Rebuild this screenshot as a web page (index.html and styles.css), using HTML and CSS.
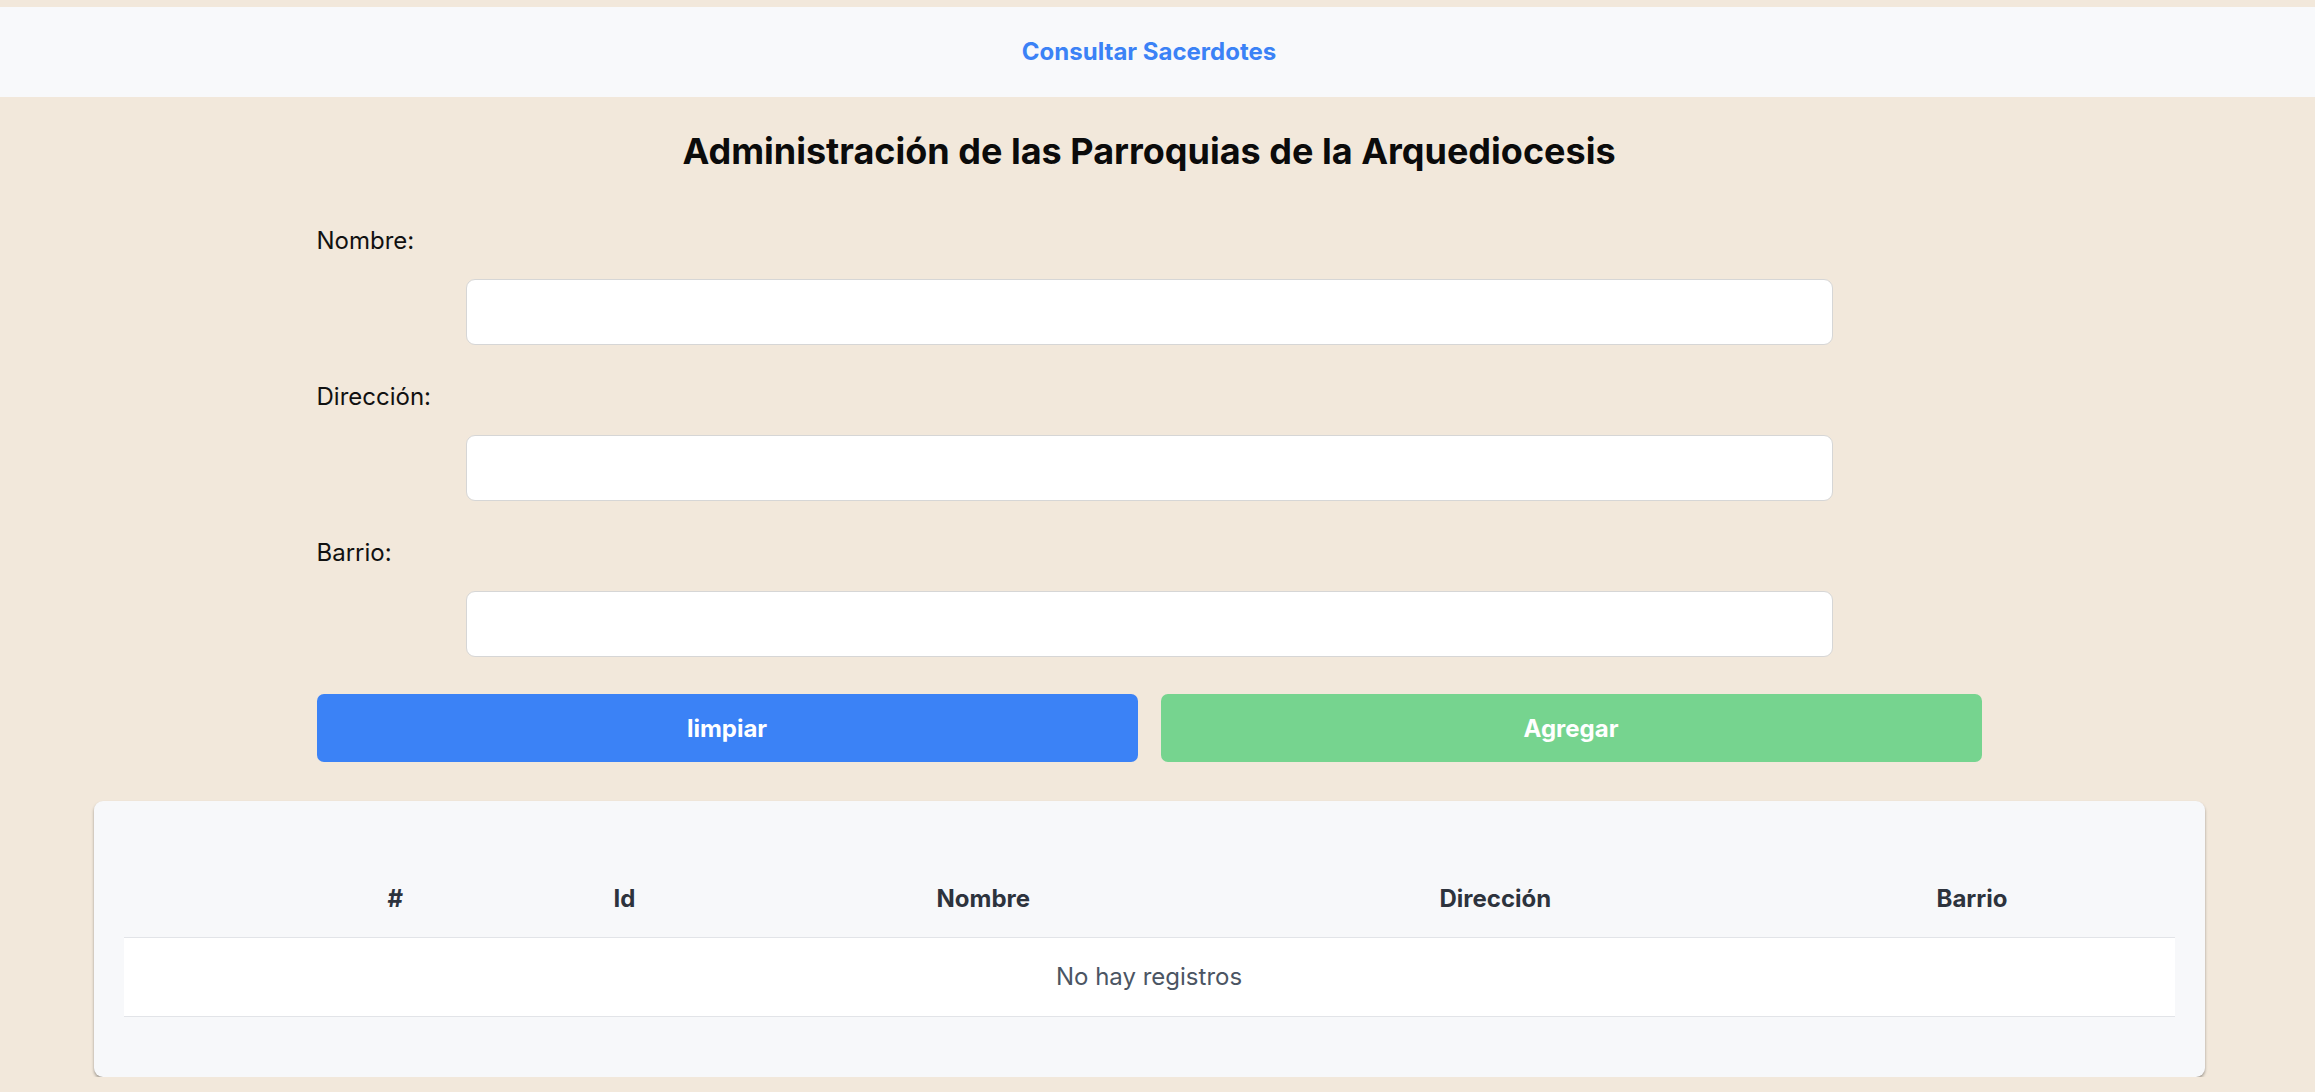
FILE: index.html
```html
<!DOCTYPE html>
<html lang="es">
<head>
<meta charset="utf-8">
<title>Parroquias</title>
<link rel="stylesheet" href="styles.css">
</head>
<body>
<nav class="topnav">
  <a class="nav-link" href="#">Consultar Sacerdotes</a>
</nav>
<main class="main">
  <h1 class="title">Administración de las Parroquias de la Arquediocesis</h1>
  <form class="form">
    <div class="field">
      <label class="label">Nombre:</label>
      <input class="input" type="text">
    </div>
    <div class="field">
      <label class="label">Dirección:</label>
      <input class="input" type="text">
    </div>
    <div class="field">
      <label class="label">Barrio:</label>
      <input class="input" type="text">
    </div>
    <div class="actions">
      <button type="button" class="btn btn-blue">limpiar</button>
      <button type="button" class="btn btn-green">Agregar</button>
    </div>
  </form>
  <section class="card">
    <table class="table">
      <thead>
        <tr>
          <th class="c1">#</th>
          <th class="c2">Id</th>
          <th class="c3">Nombre</th>
          <th class="c4">Dirección</th>
          <th class="c5">Barrio</th>
        </tr>
      </thead>
      <tbody>
        <tr>
          <td class="empty" colspan="5">No hay registros</td>
        </tr>
      </tbody>
    </table>
  </section>
</main>
</body>
</html>
```
FILE: styles.css
```css
* { box-sizing: border-box; }
html, body { margin: 0; padding: 0; }
body {
  background: #f2e8db;
  font-family: Inter, "Liberation Sans", sans-serif;
  font-size: 24px;
  line-height: 36px;
  color: #111111;
}
.topnav {
  margin-top: 7px;
  height: 90px;
  background: #f8f9fb;
  display: flex;
  align-items: center;
  justify-content: center;
  padding-right: 17px;
}
.nav-link {
  color: #3b82f6;
  font-weight: 700;
  font-size: 24px;
  text-decoration: none;
}
.main {
  padding-right: 17px;
}
.title {
  margin: 30px 0 0;
  text-align: center;
  font-size: 36px;
  line-height: 48px;
  font-weight: 700;
  color: #0b0b0b;
}
.form {
  width: 1665px;
  margin: 48px auto 0;
  display: flex;
  flex-direction: column;
}
.field {
  display: flex;
  flex-direction: column;
  margin-bottom: 34px;
}
.label {
  font-size: 24px;
  line-height: 36px;
  color: #111111;
}
.input {
  margin: 20px 149px 0;
  height: 66px;
  border: 1px solid #d6d6d6;
  border-radius: 9px;
  background: #ffffff;
  font-size: 24px;
  padding: 0 16px;
}
.actions {
  display: flex;
  gap: 23px;
  margin-top: 3px;
}
.btn {
  flex: 1;
  height: 68px;
  border: none;
  border-radius: 7px;
  color: #ffffff;
  font-family: Inter, "Liberation Sans", sans-serif;
  font-size: 24px;
  font-weight: 700;
}
.btn-blue { background: #3b82f6; }
.btn-green { background: #76d48f; }
.card {
  width: 2111px;
  margin: 39px auto 0;
  background: #f7f8fa;
  border-radius: 9px;
  box-shadow: 0 2px 3px rgba(0, 0, 0, 0.35);
  padding: 80px 30px 60px;
}
.table {
  width: 100%;
  border-collapse: collapse;
  table-layout: fixed;
}
.table th {
  text-align: left;
  font-weight: 700;
  font-size: 24px;
  line-height: 36px;
  color: #2d333d;
  padding: 0 0 20px 24px;
  border-bottom: 1px solid #e2e4e8;
}
.table th.c1 { width: 466px; padding-left: 264px; }
.table th.c2 { width: 323px; }
.table th.c3 { width: 503px; }
.table th.c4 { width: 497px; }
.table td.empty {
  background: #ffffff;
  text-align: center;
  color: #4b5563;
  font-size: 24px;
  line-height: 36px;
  padding: 21px 0 21px;
  border-bottom: 1px solid #e2e4e8;
}
```
